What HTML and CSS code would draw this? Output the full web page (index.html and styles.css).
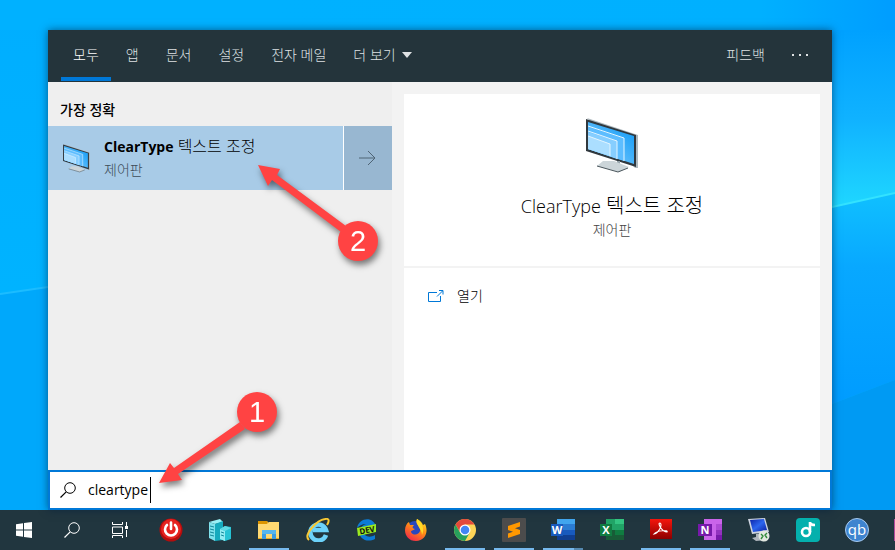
FILE: index.html
```html
<!DOCTYPE html>
<html lang="ko">
<head>
  <meta charset="UTF-8">
  <meta name="viewport" content="width=device-width, initial-scale=1.0">
  <title>ClearType 텍스트 조정</title>
  <link rel="stylesheet" href="styles.css">
</head>
<body>
  <svg class="defs" width="0" height="0" aria-hidden="true">
    <defs>
      <linearGradient id="screen" x1="0" y1="1" x2="1" y2="0">
        <stop offset="0" stop-color="#8fd4ff"/>
        <stop offset="1" stop-color="#0896f5"/>
      </linearGradient>
      <linearGradient id="flame" x1="0.8" y1="0" x2="0.2" y2="1">
        <stop offset="0" stop-color="#ffe226"/>
        <stop offset="0.45" stop-color="#ff8a16"/>
        <stop offset="1" stop-color="#f0224e"/>
      </linearGradient>
      <linearGradient id="pdf" x1="0" y1="0" x2="0" y2="1">
        <stop offset="0" stop-color="#f5150c"/>
        <stop offset="1" stop-color="#8c0000"/>
      </linearGradient>
      <linearGradient id="rdp" x1="0" y1="0" x2="1" y2="1">
        <stop offset="0" stop-color="#0a22a8"/>
        <stop offset="0.5" stop-color="#2c66ee"/>
        <stop offset="1" stop-color="#0a1ea0"/>
      </linearGradient>
      <symbol id="monitor" viewBox="0 0 52 56">
        <path d="M1 0 52 17V50L49 50Z" fill="#aeb9bf"/>
        <path d="M0 1 50 17V49L0 33Z" fill="#30383e"/>
        <path d="M2 4 48 18V46L2 31Z" fill="url(#screen)"/>
        <path d="M2 9 38 20V43L2 31Z" fill="#5dbdff"/>
        <path d="M2 14 31 23V41L2 31Z" fill="#86ceff"/>
        <path d="M2 18 24 26V38L2 31Z" fill="#abdeff"/>
        <path d="M2 8 38 20V43M2 13 31 23V41M2 18 24 26V38" fill="none" stroke="#e3f5ff"/>
        <path d="M31 43h3v5h-3z" fill="#93a1a8"/>
        <path d="M11 48 17 43 28 43 43 49 33 54Z" fill="#ccd5d9"/>
        <path d="M11 48 32 54 42 50" fill="none" stroke="#4a555b"/>
      </symbol>
      <symbol id="magnifier" viewBox="0 0 16 16">
        <circle cx="10" cy="6" r="5.3" fill="none" stroke="currentColor"/>
        <path d="M6.2 9.8.5 15.5" stroke="currentColor" stroke-width="1.2"/>
      </symbol>
    </defs>
  </svg>

  <main class="desktop">
    <svg class="wallpaper" viewBox="0 0 895 510" preserveAspectRatio="none" aria-hidden="true">
      <defs>
        <linearGradient id="left" x1="0" y1="0" x2="0" y2="1">
          <stop offset="0" stop-color="#00aeff"/>
          <stop offset="0.57" stop-color="#00b3ff"/>
          <stop offset="1" stop-color="#00a8fa"/>
        </linearGradient>
        <linearGradient id="rightTop" x1="0" y1="0" x2="0" y2="1">
          <stop offset="0" stop-color="#00a1ff"/>
          <stop offset="0.5" stop-color="#10b2ff"/>
          <stop offset="1" stop-color="#1fd7ff"/>
        </linearGradient>
        <linearGradient id="rightLow" x1="0" y1="0" x2="0" y2="1">
          <stop offset="0" stop-color="#10c0ff"/>
          <stop offset="0.35" stop-color="#08a8ff"/>
          <stop offset="1" stop-color="#009cff"/>
        </linearGradient>
        <linearGradient id="topFade" x1="0" y1="0" x2="1" y2="0">
          <stop offset="0.3" stop-color="#00b1ff"/>
          <stop offset="0.85" stop-color="#00b0ff"/>
          <stop offset="1" stop-color="#009dff"/>
        </linearGradient>
      </defs>
      <path d="M0 0H895V510H0Z" fill="url(#left)"/>
      <path d="M0 0H895V30H0Z" fill="url(#topFade)"/>
      <path d="M0 294 48 287V510H0Z" fill="#00a8fb"/>
      <path d="M0 294 48 287" stroke="#1cbcff" stroke-width="2"/>
      <path d="M832 30H895V193L832 207Z" fill="url(#rightTop)"/>
      <path d="M832 207 895 193V380L832 404Z" fill="url(#rightLow)"/>
      <path d="M832 404 895 380V510H832Z" fill="#009af3"/>
      <path d="M832 207 895 193" stroke="#33e2ff" stroke-width="2"/>
    </svg>

    <section class="search-panel">
      <nav class="tabs">
        <button class="tab active" type="button">모두</button>
        <button class="tab" type="button">앱</button>
        <button class="tab" type="button">문서</button>
        <button class="tab" type="button">설정</button>
        <button class="tab" type="button">전자 메일</button>
        <button class="tab" type="button">더 보기
          <svg class="chevron" width="10" height="6" viewBox="0 0 10 6" aria-hidden="true"><path d="M0 0H10L5 6Z" fill="currentColor"/></svg>
        </button>
        <button class="tab feedback" type="button">피드백</button>
        <button class="tab more" type="button" aria-label="옵션">
          <svg width="16" height="2" viewBox="0 0 16 2" aria-hidden="true"><path d="M0 0h2v2H0zM7 0h2v2H7zM14 0h2v2h-2z" fill="currentColor"/></svg>
        </button>
      </nav>

      <div class="panel-body">
        <div class="results">
          <h2 class="group-title">가장 정확</h2>
          <div class="result">
            <button class="result-main" type="button">
              <svg class="result-icon" width="27" height="29" aria-hidden="true"><use href="#monitor"/></svg>
              <span class="result-text">
                <span class="result-name"><b>ClearType</b> 텍스트 조정</span>
                <span class="result-type">제어판</span>
              </span>
            </button>
            <button class="result-open" type="button" aria-label="자세히">
              <svg width="18" height="16" viewBox="0 0 18 16" fill="none" stroke="#4f6475" aria-hidden="true"><path d="M0 8H16M9 1 16 8 9 15"/></svg>
            </button>
          </div>
        </div>

        <div class="preview">
          <div class="preview-head">
            <svg width="52" height="56" aria-hidden="true"><use href="#monitor"/></svg>
            <h1 class="preview-name"><span class="latin">ClearType</span> 텍스트 조정</h1>
            <p class="preview-type">제어판</p>
          </div>
          <div class="preview-actions">
            <button class="action" type="button">
              <svg width="16" height="13" viewBox="0 0 16 13" fill="none" stroke="#0078d7" aria-hidden="true"><path d="M9 2.5H.5V11.500H12.500V6M9 6.500 14.500 1M11 .500H15V4.500"/></svg>
              열기
            </button>
          </div>
        </div>
      </div>

      <label class="search-box">
        <svg width="16" height="16" aria-hidden="true"><use href="#magnifier"/></svg>
        <input class="search-input" type="text" value="cleartype" aria-label="검색">
        <span class="caret"></span>
      </label>
    </section>

    <!-- step 2 -->
    <svg class="step step-two" width="130" height="110" viewBox="250 160 130 110">
      <path d="M258 165 280 169 277 175 346 226 341 232 272 180 268 186Z"/>
      <circle cx="358" cy="241" r="20"/>
      <text x="358" y="251">2</text>
    </svg>
    <!-- step 1 -->
    <svg class="step step-one" width="130" height="110" viewBox="155 388 130 110">
      <path d="M159 483 170 463 174 468 240 422 245 429 178 474 182 480Z"/>
      <circle cx="257" cy="412" r="20"/>
      <text x="257" y="422">1</text>
    </svg>
  </main>

  <footer class="taskbar">
    <button class="sys" type="button" aria-label="시작">
      <svg width="16" height="16" viewBox="0 0 16 16" fill="#fff"><path d="M0 2.200 7 1.200V7.500H0ZM8 1 16 0V7.500H8ZM0 8.500H7V14.800L0 13.800ZM8 8.500H16V16L8 15Z"/></svg>
    </button>
    <button class="sys" type="button" aria-label="검색">
      <svg width="16" height="16"><use href="#magnifier"/></svg>
    </button>
    <button class="sys" type="button" aria-label="작업 보기">
      <svg width="16" height="16" viewBox="0 0 16 16" fill="none" stroke="#fff"><path d="M.5 0V2.500H10.500V0M.5 5H10.500V11.500H.5ZM.5 16V13.500H10.500V16M14.500 0V4M14.500 8V15"/><path d="M13 4h3v3h-3z" fill="#fff" stroke="none"/></svg>
    </button>

    <div class="apps">
      <button class="app" type="button" aria-label="전원">
        <svg width="24" height="24" viewBox="0 0 24 24"><circle cx="12" cy="12" r="11.500" fill="#b30d0d"/><circle cx="12" cy="11" r="10" fill="#e62320"/><path d="M8 7A6 6 0 1 0 16 7M12 4.500V11" fill="none" stroke="#fff" stroke-width="2.600" stroke-linecap="round"/></svg>
      </button>
      <button class="app" type="button" aria-label="서버">
        <svg width="24" height="24" viewBox="0 0 24 24"><path d="M1 4 12 1 15 4 7 6Z" fill="#9af0f5"/><path d="M1 4 7 6V23L1 20Z" fill="#7fe2ec"/><path d="M7 6 15 3V22L7 23Z" fill="#16aabd"/><path d="M12 11 17 8 23 9V21L17 23 12 21Z" fill="#25c3d4"/><path d="M12 11 17 13V23L12 21Z" fill="#93edf3"/><path d="M12 11 17 8 23 10 17 13Z" fill="#61dbe5"/><path d="M2 8 6 9M2 11 6 12M2 14 6 15M2 17 6 18M13 14 16 15M13 17 16 18" stroke="#13889a"/></svg>
      </button>
      <button class="app running" type="button" aria-label="파일 탐색기">
        <svg width="24" height="24" viewBox="0 0 24 24"><path d="M1 3H10L12 5H22V21H1Z" fill="#e9a820"/><path d="M1 3H10V6H1Z" fill="#dc9500"/><path d="M1 6H10L12 4H22V20H1Z" fill="#ffd972"/><path d="M5 12H19V21H15V16H9V21H5Z" fill="#3b9ce2"/><path d="M5 12H19V16H5Z" fill="#55b5ee"/></svg>
      </button>
      <button class="app" type="button" aria-label="Internet Explorer">
        <svg width="24" height="24" viewBox="0 0 24 24"><path d="M20 17A8 8 0 1 1 20 12H7" fill="none" stroke="#6cd2fa" stroke-width="4.500"/><path d="M3 22C-3 17 11 2 19 1C24 0 23 4 21 7" fill="none" stroke="#f7c834" stroke-width="2"/></svg>
      </button>
      <button class="app" type="button" aria-label="Edge DEV">
        <svg width="24" height="24" viewBox="0 0 24 24"><path d="M2 10C4-1 19-2 21 9V13H8C9 19 15 20 20 17V21C12 25 4 21 4 13C5 9 8 7 11 6C7 6 4 8 2 10Z" fill="#0c7bd6"/><path d="M2 10 21 6V14L3 18Z" fill="#9bea20"/><text class="dev" x="12" y="15" transform="rotate(-11 12 12)">DEV</text></svg>
      </button>
      <button class="app" type="button" aria-label="Firefox">
        <svg width="24" height="24" viewBox="0 0 24 24"><circle cx="11" cy="11" r="8" fill="#2947bd"/><path d="M13 1C17 3 18 5 19 7L21 6C25 14 21 23 12 23C5 23 1 18 1 12C1 8 3 5 5 4L6 7 10 7C8 9 8 10 11 11C9 13 7 12 7 14C9 18 15 17 16 13C17 10 15 8 14 7C12 5 12 3 13 1Z" fill="url(#flame)"/><path d="M13 1C18 4 21 11 18 17C18 11 11 7 13 1Z" fill="#ffd927"/></svg>
      </button>
      <button class="app running" type="button" aria-label="Chrome">
        <svg width="24" height="24" viewBox="0 0 24 24"><circle cx="12" cy="12" r="11" fill="#fdd457"/><path d="M2.500 6.500A11 11 0 0 1 21.500 6.500H12L7 14Z" fill="#e3493b"/><path d="M2.500 6.500A11 11 0 0 0 12 23L17 14 7 14.500Z" fill="#27a05c"/><circle cx="12" cy="12" r="5.500" fill="#fff"/><circle cx="12" cy="12" r="4.300" fill="#4285f4"/></svg>
      </button>
      <button class="app running" type="button" aria-label="Sublime Text">
        <svg width="24" height="24" viewBox="0 0 24 24"><rect width="24" height="24" rx="1" fill="#4c4c4c"/><path d="M6 8 18 4V8.500L13 10.300 18 12V16L6 20V15.500L11 13.700 6 12Z" fill="#ff9800"/></svg>
      </button>
      <button class="app running grouped" type="button" aria-label="Word">
        <svg width="24" height="24" viewBox="0 0 24 24"><path d="M6 1H24V6H6Z" fill="#41a5ee"/><path d="M6 6H24V12H6Z" fill="#2b7cd3"/><path d="M6 12H24V17H6Z" fill="#185abd"/><path d="M6 17H24V22H6Z" fill="#103f91"/><path d="M0 6H12V18H0Z" fill="#185abd"/><text class="office" x="6" y="16">W</text></svg>
      </button>
      <button class="app" type="button" aria-label="Excel">
        <svg width="24" height="24" viewBox="0 0 24 24"><path d="M6 1H15V12H6Z" fill="#21a366"/><path d="M15 1H24V6H15Z" fill="#33c481"/><path d="M15 6H24V12H15Z" fill="#21a366"/><path d="M6 12H24V22H6Z" fill="#185c37"/><path d="M15 12H24V17H15Z" fill="#107c41"/><path d="M0 6H12V18H0Z" fill="#107c41"/><text class="office" x="6" y="16">X</text></svg>
      </button>
      <button class="app running" type="button" aria-label="Acrobat">
        <svg width="24" height="24" viewBox="0 0 24 24"><path d="M1 1H23V21H1Z" fill="url(#pdf)"/><path d="M5 16C10 15 14 6 11 5C8 5 13 14 18 14C20 12 8 12 5 16Z" fill="none" stroke="#fff" stroke-width="1.100"/></svg>
      </button>
      <button class="app running" type="button" aria-label="OneNote">
        <svg width="24" height="24" viewBox="0 0 24 24"><path d="M6 1H24V22H6Z" fill="#ca64ea"/><path d="M18 6H24V12H18Z" fill="#ae4bd5"/><path d="M18 12H24V17H18Z" fill="#9332bf"/><path d="M18 17H24V22H18Z" fill="#7719aa"/><path d="M0 6H14V18H0Z" fill="#7719aa"/><text class="office" x="7" y="16">N</text></svg>
      </button>
      <button class="app" type="button" aria-label="원격 데스크톱">
        <svg width="24" height="24" viewBox="0 0 24 24"><path d="M1 1 18 0 22 14 5 16Z" fill="#ccd3df"/><path d="M3 2 17 1 20 12 6 14Z" fill="url(#rdp)"/><path d="M9 16 15 15 15 20 20 22 9 23 5 20 9 19Z" fill="#aeb5bd"/><circle cx="17" cy="18" r="5.500" fill="#e2e8e1"/><path d="M14 16 16 18 14 21M20 15 18 17 20 20" fill="none" stroke="#318b3a" stroke-width="1.400"/></svg>
      </button>
      <button class="app" type="button" aria-label="음악">
        <svg width="24" height="24" viewBox="0 0 24 24"><rect width="24" height="24" rx="4" fill="#04b0ad"/><circle cx="10" cy="14" r="4" fill="none" stroke="#fff" stroke-width="2.600"/><path d="M14 14V4C14 6 16 7 19 7" fill="none" stroke="#fff" stroke-width="2.600"/></svg>
      </button>
      <button class="app" type="button" aria-label="qBittorrent">
        <svg width="24" height="24" viewBox="0 0 24 24"><circle cx="12" cy="12" r="11.500" fill="#3e84cf" stroke="#a8caee"/><text class="qb" x="12" y="17">qb</text></svg>
      </button>
      <button class="app" type="button" aria-label="앱">
        <svg width="24" height="24" viewBox="0 0 24 24"><path d="M0 1H24V23H0Z" fill="#b5489b"/></svg>
      </button>
    </div>
  </footer>
</body>
</html>
```
FILE: styles.css
```css
* {
  box-sizing: border-box;
}
body {
  margin: 0;
  height: 100vh;
  display: flex;
  flex-direction: column;
  overflow: hidden;
  font-family: "Open Sans", "Noto Sans CJK KR", sans-serif;
  font-size: 14px;
  font-weight: 300;
  line-height: 20px;
  color: #000;
}
button {
  font: inherit;
  color: inherit;
  background: none;
  border: none;
  padding: 0;
  cursor: pointer;
}
h1, h2, p {
  margin: 0;
}
svg {
  display: block;
  flex: none;
}
.defs {
  position: absolute;
}

/* desktop */
.desktop {
  position: relative;
  flex: 1;
  min-height: 0;
  display: flex;
  padding: 30px 63px 0 48px;
}
.wallpaper {
  position: absolute;
  inset: 0;
  width: 100%;
  height: 100%;
}
.search-panel {
  position: relative;
  flex: 1;
  min-width: 0;
  display: flex;
  flex-direction: column;
  box-shadow: 0 0 8px rgba(0, 30, 60, 0.6);
}

/* tabs */
.tabs {
  height: 52px;
  display: flex;
  gap: 3px;
  padding: 0 12px 0 13px;
  background: #24343b;
  color: #dfe2e4;
}
.tab {
  display: flex;
  align-items: center;
  gap: 6px;
  padding: 2px 12px 0;
  border-bottom: 4px solid transparent;
  margin-bottom: 1px;
  white-space: nowrap;
}
.tab.active {
  color: #fff;
  border-bottom-color: #0078d7;
}
.feedback {
  margin-left: auto;
}

/* results */
.panel-body {
  flex: 1;
  min-height: 0;
  display: flex;
}
.results {
  flex: 0 0 344px;
  background: #efefef;
}
.group-title {
  padding: 18px 12px 6px;
  font-size: 14px;
  font-weight: 500;
}
.result {
  display: flex;
  height: 64px;
  gap: 1px;
  background: #fff;
}
.result-main {
  flex: 1;
  display: flex;
  align-items: center;
  gap: 14px;
  padding: 0 15px;
  background: #a8cbe7;
  text-align: left;
}
.result-text {
  display: flex;
  flex-direction: column;
  gap: 3px;
}
.result-name {
  font-size: 16px;
}
.result-name b {
  font-size: 14px;
  font-weight: 700;
}
.result-type {
  font-size: 14px;
  color: #3d4c58;
}
.result-open {
  width: 48px;
  display: flex;
  align-items: center;
  justify-content: center;
  background: #98b7d1;
}

/* preview */
.preview {
  flex: 1;
  min-width: 0;
  display: flex;
  flex-direction: column;
  gap: 2px;
  padding: 12px 12px 0;
  background: #f3f3f3;
}
.preview-head {
  height: 172px;
  display: flex;
  flex-direction: column;
  align-items: center;
  padding-top: 24px;
  background: #fff;
}
.preview-name {
  margin-top: 18px;
  font-size: 20px;
  line-height: 28px;
  font-weight: 300;
}
.latin {
  font-size: 18px;
}
.preview-type {
  color: #444;
}
.preview-actions {
  flex: 1;
  padding: 18px 24px;
  background: #fff;
}
.action {
  display: flex;
  align-items: center;
  gap: 13px;
}

/* search box */
.search-box {
  height: 40px;
  display: flex;
  align-items: center;
  padding: 0 10px;
  border: 2px solid #0078d7;
  background: #fff;
}
.search-input {
  width: 62px;
  margin-left: 12px;
  padding: 0;
  border: none;
  outline: none;
  font: inherit;
  font-size: 14px;
  font-weight: 400;
  color: #000;
}
.caret {
  width: 1px;
  height: 26px;
  background: #000;
}

/* numbered callouts */
.step {
  position: absolute;
  fill: #ff4343;
  overflow: visible;
  filter: drop-shadow(2px 4px 3px rgba(0, 0, 0, 0.5));
}
.step-one {
  left: 155px;
  top: 388px;
}
.step-two {
  left: 250px;
  top: 160px;
}
.step text {
  fill: #fff;
  font-family: "Liberation Sans", sans-serif;
  font-size: 29px;
  font-weight: 400;
  text-anchor: middle;
}

/* taskbar */
.taskbar {
  flex: none;
  height: 40px;
  display: flex;
  background: #21363f;
  color: #fff;
  overflow: hidden;
}
.sys {
  flex: none;
  width: 48px;
  display: flex;
  align-items: center;
  justify-content: center;
}
.apps {
  flex: none;
  display: flex;
  gap: 1px;
  padding-left: 3px;
}
.app {
  position: relative;
  width: 48px;
  display: flex;
  align-items: center;
  justify-content: center;
}
.running::after {
  content: "";
  position: absolute;
  left: 4px;
  right: 4px;
  bottom: 0;
  height: 2px;
  background: #76b9ed;
}
.grouped::after {
  background: linear-gradient(to right, #76b9ed 31px, #5589b0 31px);
}
.app text {
  fill: #fff;
  text-anchor: middle;
  font-family: "Open Sans", sans-serif;
}
.app .office {
  font-size: 11px;
  font-weight: 700;
}
.app .dev {
  fill: #111;
  font-size: 8px;
  font-weight: 700;
}
.app .qb {
  font-size: 15px;
  font-weight: 400;
}
```
